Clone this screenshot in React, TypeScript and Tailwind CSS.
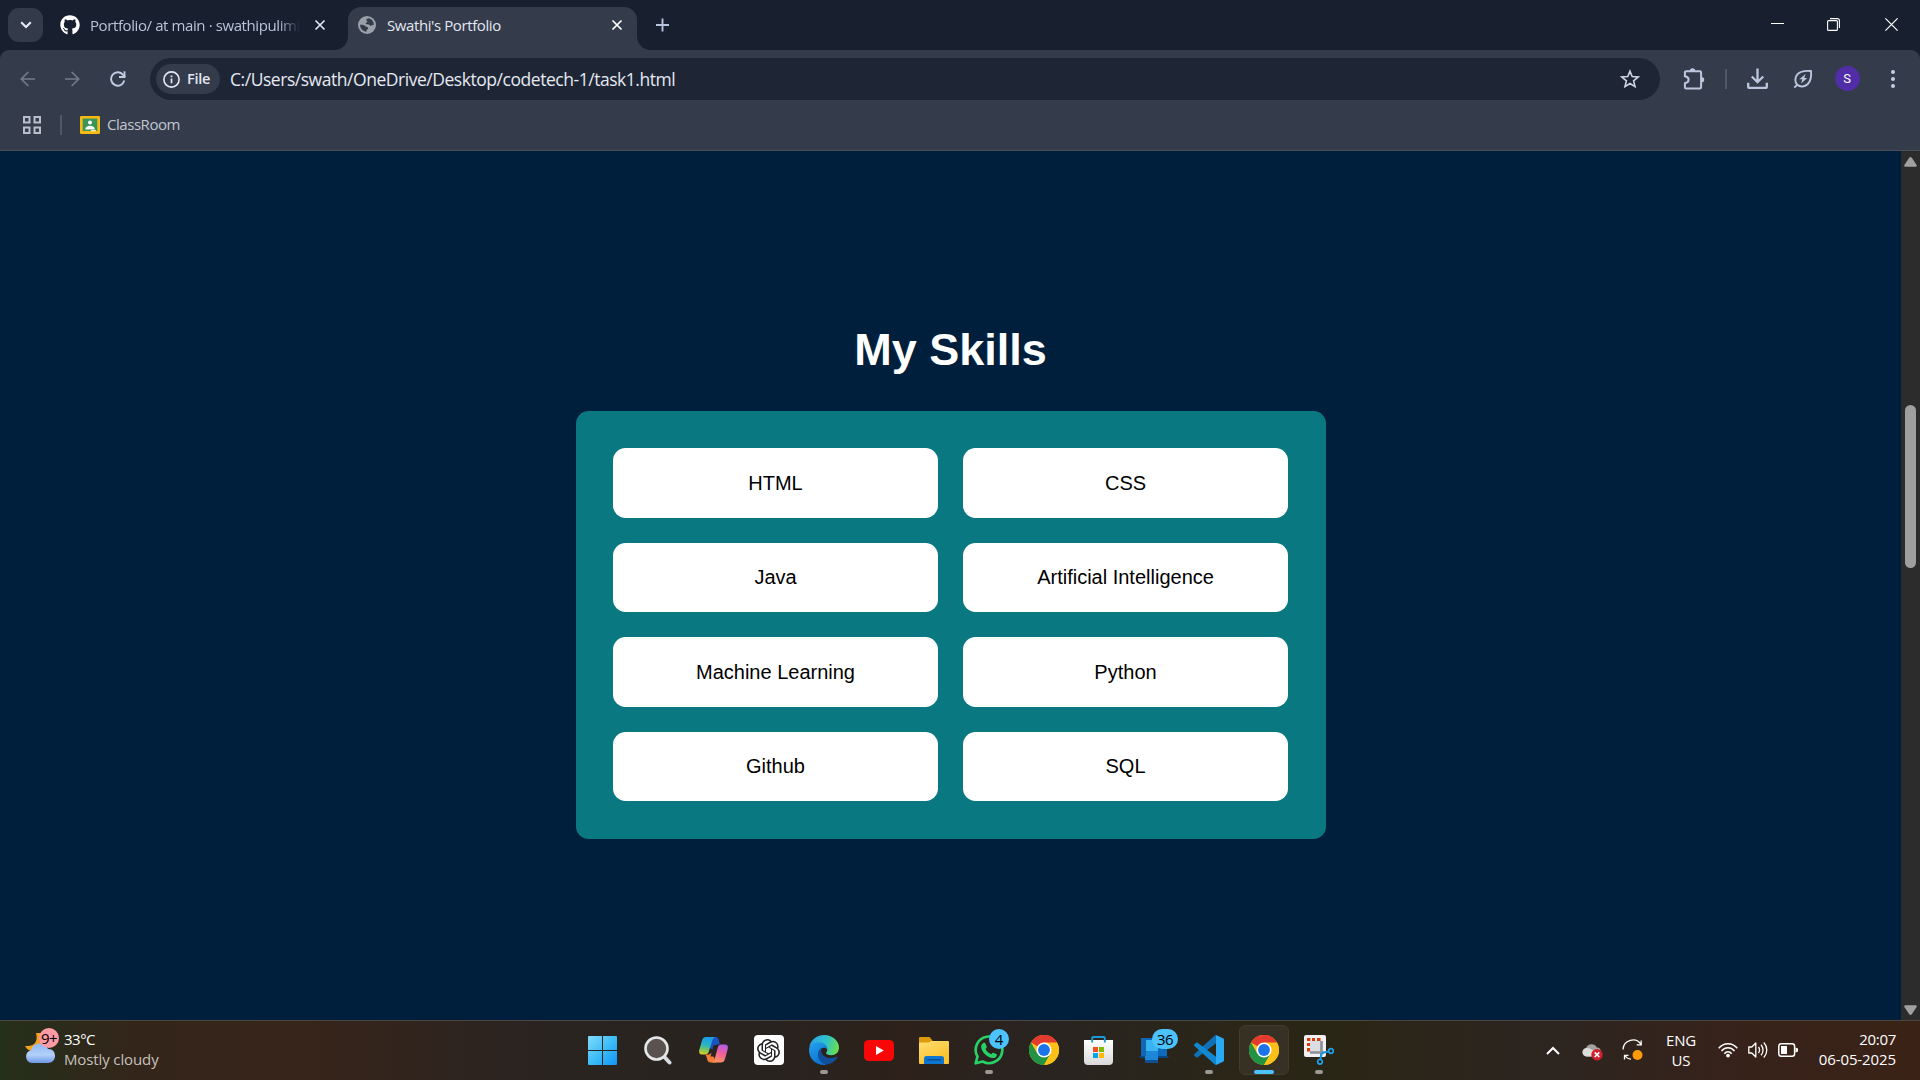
import React from "react";
import { FaGithub } from "react-icons/fa";
import { SiOpenai } from "react-icons/si";

const skills = ["HTML", "CSS", "Java", "Artificial Intelligence", "Machine Learning", "Python", "Github", "SQL"];

function Close({ className = "" }: { className?: string }) {
  return (
    <svg width="12" height="12" viewBox="0 0 12 12" className={className} fill="none" stroke="currentColor" strokeWidth="1.7">
      <path d="M1.5 1.5l9 9M10.5 1.5l-9 9" />
    </svg>
  );
}

function TabStrip() {
  return (
    <div className="flex h-[50px] bg-[#18202f] text-[15px]">
      <div className="mt-2 ml-2 flex h-[34px] w-[35px] items-center justify-center rounded-[11px] bg-[#333b4a]">
        <svg width="12" height="8" viewBox="0 0 12 8" fill="none" stroke="#e6eaf5" strokeWidth="2.1">
          <path d="M1.2 1.2L6 6l4.8-4.8" />
        </svg>
      </div>
      <div className="flex h-[50px] w-[293px] items-center">
        <FaGithub size={20} color="#fff" className="ml-[17px] shrink-0" />
        <div className="ml-[10px] w-[214px] whitespace-nowrap tracking-[-0.4px] text-[#b9c3d9] [mask-image:linear-gradient(to_right,black_88%,transparent_98%)]">
          Portfolio/ at main · swathipulimi
        </div>
        <Close className="ml-[10px] shrink-0 text-[#dfe3ee]" />
      </div>
      <div className="relative mt-[7px] ml-[12px] flex h-[43px] w-[289px] rounded-t-[13px] bg-[#343c4c]">
        <svg className="absolute bottom-0 -left-[14px]" width="14" height="14">
          <path d="M14 0v14H0C8 14 14 8 14 0z" fill="#343c4c" />
        </svg>
        <svg className="absolute -right-[14px] bottom-0" width="14" height="14">
          <path d="M0 0v14h14C6 14 0 8 0 0z" fill="#343c4c" />
        </svg>
        <div className="flex h-9 w-full items-center">
          <svg className="ml-[10px] shrink-0" width="18" height="18" viewBox="0 0 18 18">
            <circle cx="9" cy="9" r="9" fill="#9aa0a8" />
            <path d="M10.500 2.200C8.300 2.600 7.600 4 8.800 4.700c1.200.7 0 1.700-.9 2.300-.8.700.3 1.400 1.800 1.300 1.700-.1 1.800 1.600 3.200 1.500 1.100-.1 1.300-1.200 3-1a7 7 0 00-5.400-6.600zM2 8.700c2.800-.2 4.400.3 5.500 1.500 1 1.100 2.900.4 2.700 2-.1 1.300-2 1-1.700 3.700A7 7 0 012 8.700z" fill="#343c4c" />
          </svg>
          <span className="ml-[11px] flex-1 whitespace-nowrap tracking-[-0.4px] text-[#e3e7f0]">Swathi's Portfolio</span>
          <Close className="mr-[14px] text-white" />
        </div>
      </div>
      <svg className="mt-[18px] ml-[19px]" width="13" height="14" viewBox="0 0 13 14" stroke="#b9c5de" strokeWidth="1.900">
        <path d="M6.500 0.500v13M0 7h13" />
      </svg>
      <div className="ml-auto flex">
        <svg className="mt-[17px] mr-[43px]" width="13" height="13" stroke="#fff" strokeWidth="1">
          <path d="M0 6.500h13" />
        </svg>
        <svg className="mt-[18px] mr-[45px]" width="13" height="13" fill="none" stroke="#fff" strokeWidth="1.100">
          <rect x="0.600" y="2.600" width="9.800" height="9.800" rx="1" />
          <path d="M3 .6h7.400a2 2 0 012 2V10" />
        </svg>
        <svg className="mt-[18px] mr-[22px]" width="13" height="13" stroke="#fff" strokeWidth="1.200">
          <path d="M.4.4l12.200 12.200M12.600.4L.4 12.600" />
        </svg>
      </div>
    </div>
  );
}

function Toolbar() {
  return (
    <div className="h-[100px] bg-[#18202f]">
      <div className="h-[100px] rounded-t-[9px] bg-[#343c4c]">
        <div className="flex h-[58px] items-center">
          <svg className="ml-5 shrink-0" width="15" height="16" viewBox="0 0 15 16" fill="none" stroke="#737b8b" strokeWidth="1.700">
            <path d="M15 8H1.500M8.300 1L1.300 8l7 7" />
          </svg>
          <svg className="ml-[30px] shrink-0" width="15" height="16" viewBox="0 0 15 16" fill="none" stroke="#737b8b" strokeWidth="1.700">
            <path d="M0 8h13.500M6.700 1l7 7-7 7" />
          </svg>
          <svg className="-mt-px ml-[30px] shrink-0" width="16" height="16" viewBox="0 0 16 16" fill="none" stroke="#c0cbe4" strokeWidth="1.900">
            <path d="M14.300 9.600A6.700 6.700 0 1 1 13.200 4L15 6" />
            <path d="M14.500 .3v5.700H9" />
          </svg>
          <div className="ml-6 flex h-[42px] w-[1510px] items-center rounded-full bg-[#1e2636]">
            <div className="ml-[6px] flex h-[30px] w-16 items-center rounded-full bg-[#343c4c]">
              <svg className="ml-[7px]" width="17" height="17" viewBox="0 0 17 17" fill="none" stroke="#e3e7f2" strokeWidth="1.600">
                <circle cx="8.500" cy="8.500" r="7.600" />
                <path d="M8.500 7.600v4.600M8.500 4.500v1.700" strokeWidth="1.700" />
              </svg>
              <span className="-mt-px ml-[7px] text-[14.500px] font-semibold tracking-[-0.300px] text-[#e3e7f2]">File</span>
            </div>
            <span className="ml-[10px] whitespace-nowrap text-[17.500px] tracking-[-0.460px] text-[#e6e9f2]">
              C:/Users/swath/OneDrive/Desktop/codetech-1/task1.html
            </span>
            <svg className="mr-[20px] ml-auto" width="20" height="20" viewBox="0 0 20 20" fill="none" stroke="#d0d5e2" strokeWidth="1.600">
              <path d="M10 2.200l2.200 5.300 5.900.5-4.500 3.900 1.400 5.700-5-3.100-5 3.100 1.400-5.700L1.900 8l5.900-.5z" />
            </svg>
          </div>
          <svg className="-mt-px ml-[22.500px]" width="22" height="22" viewBox="0 0 22 22">
            <path d="M3.200 3.200h13.600a1.300 1.300 0 011.300 1.300v14.700a1.300 1.300 0 01-1.300 1.300H3.200A1.300 1.300 0 011.900 19.200V15.300c5-1 5-6 0-7V4.500a1.300 1.300 0 011.300-1.300z" fill="none" stroke="#bcc7df" strokeWidth="2" />
            <path d="M6.800 3a2.700 2.700 0 015.400 0zM18.500 9a2.700 2.700 0 010 5.400z" fill="#bcc7df" />
          </svg>
          <div className="ml-[20.500px] h-5 w-[2px] bg-[#505868]" />
          <svg className="ml-5" width="21" height="22" viewBox="0 0 21 22" fill="none" stroke="#bcc7df" strokeWidth="2.300">
            <path d="M10.500.5v13.300M4.800 8.500l5.700 5.700 5.700-5.700" />
            <path d="M1.200 14.800v3.600a1.500 1.500 0 001.500 1.500h15.600a1.500 1.500 0 001.500-1.500v-3.600" />
          </svg>
          <svg className="-mt-px ml-[24.500px]" width="20" height="20" viewBox="0 0 20 20" fill="none" stroke="#bcc7df" strokeWidth="1.900">
            <path d="M1.300 18.700l2.800-2.900M4.300 15.800C1.500 13 1.700 8.300 4.600 5.200 7.700 1.800 12.800 1.500 18 2c.5 5.200.2 9.700-3.200 13-3 2.900-7.500 3.400-10.500.8z" />
            <path d="M12.600 5L6.300 10.200h3l-1.200 4.400 6.200-5.500h-3z" fill="#bcc7df" stroke="none" />
          </svg>
          <div className="-mt-px ml-[22px] flex size-[25px] items-center justify-center rounded-full bg-[#512da8] font-[Roboto] text-[13px] text-white">S</div>
          <div className="ml-[31px] flex flex-col gap-[3px]">
            <i className="size-[4px] rounded-full bg-[#c3cde3]" />
            <i className="size-[4px] rounded-full bg-[#c3cde3]" />
            <i className="size-[4px] rounded-full bg-[#c3cde3]" />
          </div>
        </div>
        <div className="flex h-[34px] items-center">
          <svg className="ml-[23px]" width="18" height="18" fill="none" stroke="#b9bec9" strokeWidth="2">
            <path d="M1 1h5.500v5.500H1zM11.500 1H17v5.500h-5.500zM1 11.500h5.500V17H1zM11.500 11.500H17V17h-5.500z" />
          </svg>
          <div className="ml-[19px] h-5 w-[2px] bg-[#505868]" />
          <svg className="ml-[18px]" width="20" height="18" viewBox="0 0 20 18">
            <rect width="20" height="18" rx="1.200" fill="#f6bb12" />
            <rect x="2.700" y="2.500" width="14.600" height="12.500" fill="#3c9558" />
            <circle cx="10" cy="6.500" r="2" fill="#fff" />
            <path d="M5.200 13.500c0-5 9.600-5 9.600 0z" fill="#fff" />
            <path d="M11 14h5v1.400h-5z" fill="#f3e7b0" />
          </svg>
          <span className="-mt-[2px] ml-[7px] text-[15px] tracking-[-0.450px] text-[#c2c6d0]">ClassRoom</span>
        </div>
      </div>
    </div>
  );
}

function Page() {
  return (
    <div className="flex h-[870px] border-t border-[#4a4d55] bg-[#001f3d]">
      <main className="flex w-[1901px] flex-col items-center font-['Liberation_Sans',Arial,sans-serif]">
        <h2 className="mt-[173px] text-[45px] leading-[52px] font-bold text-white">My Skills</h2>
        <div className="mt-[35px] grid h-[428px] w-[750px] auto-rows-[69.4px] grid-cols-2 gap-[25px] rounded-[12.500px] bg-[#0a7881] p-[37.500px] pt-[37.400px]">
          {skills.map((s) => (
            <div key={s} className="flex items-center justify-center rounded-[12.500px] bg-white pb-[0.500px] text-[20px] text-black">
              {s}
            </div>
          ))}
        </div>
      </main>
      <div className="flex w-[19px] flex-col items-center bg-[#2c2c2c]">
        <svg className="mt-[6px]" width="13" height="10">
          <path d="M5.200.8q1.300-1.400 2.600 0L12.600 8q.7 1.700-1 1.700H1.400Q-.3 9.700.4 8z" fill="#a0a0a0" />
        </svg>
        <div className="mt-[238px] h-[163px] w-[11px] rounded-full bg-[#9f9f9f]" />
        <svg className="mt-auto mb-[5px]" width="13" height="10">
          <path d="M5.200 9.200q1.300 1.400 2.600 0L12.600 2q.7-1.700-1-1.700H1.400Q-.3.3.4 2z" fill="#a0a0a0" />
        </svg>
      </div>
    </div>
  );
}

function Chrome() {
  return (
    <svg width="30" height="30" viewBox="0 0 48 48">
      <circle cx="24" cy="24" r="24" fill="#fbc116" />
      <path d="M24 24L3.200 12A24 24 0 0144.800 12z" fill="#e33b2e" />
      <path d="M24 12h20.800A24 24 0 0024 0z" fill="#e33b2e" />
      <path d="M3.200 12A24 24 0 0024 48l10.400-18L24 24l-10.400 6z" fill="#229342" />
      <path d="M24 12h20.800A24 24 0 0124 48l10.400-18z" fill="#fbc116" />
      <circle cx="24" cy="24" r="12" fill="#fff" />
      <circle cx="24" cy="24" r="9.500" fill="#1a73e8" />
    </svg>
  );
}

function Windows() {
  return (
    <svg className="mr-[2px]" width="29" height="29">
      <defs>
        <linearGradient id="win" x1="0" y1="0" x2="29" y2="29" gradientUnits="userSpaceOnUse">
          <stop stopColor="#82dcfb" />
          <stop offset="0.500" stopColor="#3fbdf8" />
          <stop offset="1" stopColor="#1094f5" />
        </linearGradient>
      </defs>
      <path d="M1 0h13v14H0V1a1 1 0 011-1zM15 0h13a1 1 0 011 1v13H15zM0 15h14v14H1a1 1 0 01-1-1zM15 15h14v13a1 1 0 01-1 1H15z" fill="url(#win)" />
    </svg>
  );
}

function Search() {
  return (
    <svg className="mr-[2px]" width="28" height="29" viewBox="0 0 28 29">
      <path d="M19.500 20l6 6.500" stroke="#d8dadd" strokeWidth="4" strokeLinecap="round" />
      <circle cx="12.500" cy="12.500" r="11" fill="#59524f" stroke="#e6e7e8" strokeWidth="2.600" />
    </svg>
  );
}

function Copilot() {
  return (
    <svg className="-mt-px" width="29" height="26" viewBox="0 0 29 26">
      <defs>
        <linearGradient id="cpA" x1="8" y1="0" x2="4" y2="18" gradientUnits="userSpaceOnUse">
          <stop stopColor="#1c9ce8" />
          <stop offset="0.450" stopColor="#2cb5c0" />
          <stop offset="0.750" stopColor="#88c850" />
          <stop offset="1" stopColor="#eecb1e" />
        </linearGradient>
        <linearGradient id="cpB" x1="24" y1="6" x2="17" y2="26" gradientUnits="userSpaceOnUse">
          <stop stopColor="#a75cf0" />
          <stop offset="0.500" stopColor="#f0619a" />
          <stop offset="1" stopColor="#fd9a56" />
        </linearGradient>
      </defs>
      <path d="M9 0h7.500c1.800 0 2.700 1 3.200 2.500L20.800 7.500H19c-2 0-3 1-3.500 2.500L14 13l-3-2z" fill="#1b52c4" />
      <path d="M7 0h10c-2 0-3 1.500-3.500 3L10 14c-.7 2.600-2 3.500-4 3.500H3C.5 17.500-.3 15.500.3 13L3 3.500C3.700 1 5 0 7 0z" fill="url(#cpA)" />
      <path d="M6 17.500h4l3-2 4 10H12c-2.500 0-3.300-1.200-3.800-3-.5-2-.7-4-2.200-5z" fill="#f47b38" />
      <path d="M22 25.500H12c2 0 3-1.500 3.500-3l3.300-12C19.500 8 21 7.500 23 7.500h3c2.500 0 3.300 2 2.700 4.500L26 22c-.7 2.500-2 3.500-4 3.500z" fill="url(#cpB)" />
      <path d="M14.500 8h4.500L15.500 19.500h-4z" fill="#2a2421" />
    </svg>
  );
}

function Edge() {
  return (
    <svg width="30" height="30" viewBox="0 0 30 30">
      <defs>
        <linearGradient id="edTop" x1="2" y1="6" x2="29" y2="14" gradientUnits="userSpaceOnUse">
          <stop stopColor="#2aa5e6" />
          <stop offset="0.550" stopColor="#30c5c6" />
          <stop offset="1" stopColor="#6ae04a" />
        </linearGradient>
        <linearGradient id="edL" x1="2" y1="10" x2="14" y2="30" gradientUnits="userSpaceOnUse">
          <stop stopColor="#229be8" />
          <stop offset="1" stopColor="#0a6ed0" />
        </linearGradient>
      </defs>
      <path d="M.3 12C1.500 5 7.500 0 15 0c8.500 0 15 6 15 12.500 0 5-3.500 7.700-7.700 7.700-3.200 0-5.300-1-5.300-2.200 0-.8 1.300-1.300 1.300-3.200C18.300 11 14.500 8 10 8 6 8 2 9.500.3 12z" fill="url(#edTop)" />
      <path d="M0 15C0 10 4.500 7.300 9.800 7.300c5 0 8.500 3.200 8.500 7-2.500-3.500-8.500-1.300-8.500 4.700 0 5 3 9 7.700 10.700-1 .2-2 .3-2.500.3C6.500 30 0 23.500 0 15z" fill="url(#edL)" />
      <path d="M13.500 12.500C10 14 8.500 17 9 20.500c.6 5 4.500 9 9 9 3.500-.3 8-3 10.300-7 .4-.7-.2-1-.8-.7-6 3-14.500.5-15.300-5.300-.2-1.700.3-3 1.300-4z" fill="#124f9c" />
    </svg>
  );
}

function YouTube() {
  return (
    <svg width="30" height="21">
      <rect width="30" height="21" rx="4.500" fill="#f90606" />
      <path d="M12 6v9l7.800-4.500z" fill="#fff" />
    </svg>
  );
}

function Explorer() {
  return (
    <svg width="30" height="27" viewBox="0 0 30 27">
      <defs>
        <linearGradient id="fld" x1="0" y1="4" x2="10" y2="27" gradientUnits="userSpaceOnUse">
          <stop stopColor="#ffdf73" />
          <stop offset="1" stopColor="#fbc32f" />
        </linearGradient>
      </defs>
      <path d="M0 1a1 1 0 011-1h9.500l3 3.500L10 8H0z" fill="#dd9a0b" />
      <path d="M0 5.500h9c1 0 1.300-.2 2-.7l1.300-.8H29a1 1 0 011 1V26a1 1 0 01-1 1H1a1 1 0 01-1-1z" fill="url(#fld)" />
      <path d="M5 27v-5.500a2.500 2.500 0 012.500-2.500h15a2.500 2.500 0 012.500 2.500V27z" fill="#0f76cf" />
      <path d="M8.500 22.800h13" stroke="#064f96" strokeWidth="1.500" strokeLinecap="round" />
    </svg>
  );
}

function WhatsApp() {
  return (
    <svg width="30" height="30" viewBox="0 0 30 30">
      <path d="M1.700 28.300l1.800-6.800A13.300 13.300 0 1 1 8.600 26.500z" fill="none" stroke="#26d266" strokeWidth="2.700" strokeLinejoin="round" />
      <path d="M10.200 7.800c.7 0 1 .2 1.300.9l1.200 2.700c.4.9-.3 1.500-1.200 2.500 1.200 2.500 3.200 4.200 5.800 5.300.9-1 1.300-1.800 2.100-1.500l2.900 1.400c.6.3.7.6.5 1.400-.4 1.700-2.200 2.700-4 2.600-5.500-.6-10.700-5.500-11.600-10.600-.2-2 1.200-4.700 3-4.700z" fill="#26d266" />
    </svg>
  );
}

function Store() {
  return (
    <svg width="29" height="30" viewBox="0 0 29 30">
      <defs>
        <linearGradient id="st" x1="0" y1="0" x2="0" y2="1">
          <stop stopColor="#fff" />
          <stop offset="1" stopColor="#d9d9d9" />
        </linearGradient>
      </defs>
      <path d="M0 5h29v21a4 4 0 01-4 4H4a4 4 0 01-4-4z" fill="url(#st)" />
      <path d="M8.200 7.500V3a1 1 0 011-1h10.600a1 1 0 011 1v4.500" fill="none" stroke="#1a98d8" strokeWidth="1.900" />
      <path d="M9 12h5v5H9z" fill="#f25022" />
      <path d="M15 12h5v5h-5z" fill="#7fba00" />
      <path d="M9 18h5v5H9z" fill="#00a4ef" />
      <path d="M15 18h5v5h-5z" fill="#ffb900" />
    </svg>
  );
}

function PhoneLink() {
  return (
    <svg className="mt-[1px]" width="30" height="27" viewBox="0 0 30 27">
      <path d="M2 1h26v19H2z" fill="#0d6abb" />
      <path d="M0 19h30l-1.500 2H1.500z" fill="#08467f" />
      <path d="M6 5h13v17a4 4 0 01-4 4H7a1 1 0 01-1-1z" fill="#135ca5" />
      <path d="M6 3h13v11H6z" fill="#38b4f0" />
      <path d="M6 14h13v9H6z" fill="#1e86d8" />
      <path d="M2 1h5v18H2z" fill="#1267b4" />
      <path d="M6 23h13v3H6z" fill="#114f91" />
    </svg>
  );
}

function VSCode() {
  return (
    <svg width="30" height="30" viewBox="0 0 30 30">
      <path d="M22 0v8.300L3.700 22.200a1.200 1.200 0 01-1.600 0L.5 20.700a1.200 1.200 0 010-1.800L20.500.7z" fill="#0f72b8" />
      <path d="M22 30v-8.300L3.700 7.800a1.200 1.200 0 00-1.600 0L.5 9.300a1.200 1.200 0 000 1.800l20 18.200z" fill="#1188d0" />
      <path d="M22 0l7 3.300a1.700 1.700 0 011 1.500v20.400a1.700 1.700 0 01-1 1.500L22 30z" fill="#2aaaf2" />
    </svg>
  );
}

function Snip() {
  return (
    <svg width="30" height="30" viewBox="0 0 30 30">
      <rect width="22" height="22" rx="2" fill="#f1f1f3" />
      <rect x="6" y="6" width="11" height="11" fill="#dcdde0" />
      <path d="M3 4.500h3.400M8 4.500h3M13 4.500h3.500M4.500 8v3M4.500 13v3.500" stroke="#d83b0a" strokeWidth="3" />
      <path d="M17.500 6v13.500M6 17.500h14" stroke="#8b9096" strokeWidth="2.600" />
      <path d="M17.500 18l-1 6M18 18l6-1.500" stroke="#1c93dc" strokeWidth="2.200" />
      <circle cx="16" cy="26.800" r="2.300" fill="none" stroke="#1ea0ea" strokeWidth="1.700" />
      <circle cx="27" cy="16" r="2.300" fill="none" stroke="#1ea0ea" strokeWidth="1.700" />
    </svg>
  );
}

function Gpt() {
  return (
    <div className="flex size-[30px] items-center justify-center rounded-[4px] bg-white text-[#222]">
      <SiOpenai size={23} />
    </div>
  );
}

type App = { icon: () => React.ReactElement; running?: boolean; active?: boolean; badge?: string };
const apps: App[] = [
  { icon: Windows },
  { icon: Search },
  { icon: Copilot },
  { icon: Gpt },
  { icon: Edge, running: true },
  { icon: YouTube },
  { icon: Explorer },
  { icon: WhatsApp, running: true, badge: "4" },
  { icon: Chrome },
  { icon: Store },
  { icon: PhoneLink, badge: "36" },
  { icon: VSCode, running: true },
  { icon: Chrome, active: true },
  { icon: Snip, running: true },
];

function Tray() {
  return (
    <div className="ml-auto flex h-[59px] items-center text-[15px] leading-5 text-white">
      <svg className="mr-[22px] -mt-px" width="14" height="9" fill="none" stroke="#fff" strokeWidth="2">
        <path d="M1 8l6-6 6 6" />
      </svg>
      <svg className="mt-[2px] mr-[19px]" width="21" height="18" viewBox="0 0 21 18">
        <path d="M4.500 13.500A4.200 4.200 0 014 5.200C5.500 0 13 0 14.800 4.500c2.700 0 4.200 2 4.200 4.500s-2 4.500-4.500 4.500z" fill="#a3a3a1" />
        <path d="M4.500 13.500A4.200 4.200 0 015 5c3 0 5 2 8 3.500v5z" fill="#deddda" />
        <circle cx="15" cy="11.700" r="5.700" fill="#d01f2e" />
        <path d="M12.700 9.400l4.600 4.600M17.300 9.400l-4.600 4.600" stroke="#fff" strokeWidth="1.600" />
      </svg>
      <svg className="-mt-px mr-[23px]" width="21" height="22" viewBox="0 0 21 22" fill="none" stroke="#fff" strokeWidth="1.300">
        <path d="M1 10.500C1.500 1 14-2.500 19 5.500M19.200 1.500v4.300h-4.500M2.500 20.500v-4.200h4M2.700 16.500c1.500 2.200 3.800 3.500 6.300 3.700" />
        <circle cx="15.500" cy="16" r="5" fill="#ff9a0a" stroke="none" />
      </svg>
      <div className="-mt-[1px] w-[30px] text-center tracking-[-0.200px]">
        ENG
        <br />
        US
      </div>
      <svg className="-mt-px ml-[22px]" width="20" height="16" viewBox="0 0 20 16" fill="none" stroke="#fff" strokeWidth="1.500">
        <path d="M.7 6.200c5-6 13.600-6 18.600 0M3.500 9c3.700-4.300 9.300-4.300 13 0M6.300 11.700c2.100-2.500 5.300-2.500 7.400 0" />
        <circle cx="10" cy="13.600" r="1.900" fill="#fff" stroke="none" />
      </svg>
      <svg className="-mt-px ml-[10px]" width="20" height="18" viewBox="0 0 20 18" fill="none" stroke="#fff" strokeWidth="1.300" strokeLinejoin="round">
        <path d="M.8 6v6h3l4 4V2L3.800 6zM10.500 6c1.300 1.800 1.300 4.200 0 6M13 3.800c2.700 3 2.700 7.400 0 10.400M15.800 1.500c4 4.300 4 10.700 0 15" />
      </svg>
      <svg className="-mt-px ml-[10px]" width="20" height="14" viewBox="0 0 20 14">
        <rect x=".8" y=".8" width="15.800" height="12.400" rx="2.500" fill="none" stroke="#fff" strokeWidth="1.500" />
        <path d="M3 3h6v8H3z" fill="#fff" />
        <path d="M17.500 4.500l2.500 1v3l-2.500 1z" fill="#fff" />
      </svg>
      <div className="-mt-1 mr-6 ml-[20px] w-[78px] whitespace-nowrap">
        <div className="flex justify-end tracking-[-0.300px]">20:07</div>
        <div className="flex justify-end tracking-[-0.100px]">06-05-2025</div>
      </div>
    </div>
  );
}

function Taskbar() {
  return (
    <div className="flex h-[60px] border-t border-[#4c4740] bg-[linear-gradient(90deg,#25301b_0px,#33251a_130px,#37241a_300px,#2a2421_540px,#29231f_780px,#2d211a_900px,#292421_1040px,#2a2617_1250px,#2a2616_1340px,#2c2520_1530px,#37221a_1750px,#3a2216_1920px)]">
      <div className="flex w-[576px] text-[15px] leading-5">
        <div className="relative mt-[6px] ml-[25px] h-[36px] w-[34px]">
          <svg width="34" height="36" viewBox="0 0 34 36">
            <defs>
              <linearGradient id="cl" x1="0" y1="16" x2="0" y2="36" gradientUnits="userSpaceOnUse">
                <stop stopColor="#8fb8f5" />
                <stop offset="0.600" stopColor="#b2d0fa" />
                <stop offset="1" stopColor="#6d98e6" />
              </linearGradient>
            </defs>
            <path d="M11 6c2 7 0 14-11 13 3 7 14 7 18 0V6z" fill="#f7a11b" />
            <path d="M6.500 36A6.500 6.500 0 016 23.300C7.500 15 20 14 23 22c4.500-.3 7 3 7 7s-3 7-7 7z" fill="url(#cl)" />
          </svg>
          <div className="absolute top-[1px] left-[14px] flex size-5 items-center justify-center rounded-full bg-[#ff99a4] text-[15px] tracking-[-0.600px] text-black">9+</div>
        </div>
        <div className="mt-[8px] ml-[5px] whitespace-nowrap">
          <div className="tracking-[-0.500px] text-white">33°C</div>
          <div className="tracking-[-0.120px] text-[#c6c1bd]">Mostly cloudy</div>
        </div>
      </div>
      <div className="flex">
        {apps.map(({ icon: Icon, running, active, badge }, i) => (
          <div key={i} className="relative flex w-[55px] flex-col items-center pt-1">
            <div className={active ? "flex h-[50px] w-[50px] items-center justify-center rounded-md border border-[#403b2d] bg-[#363124]" : "flex h-[50px] w-[50px] items-center justify-center"}>
              <Icon />
            </div>
            {running && <div className="absolute top-[49px] h-1 w-2 rounded-full bg-[#9c9893]" />}
            {active && <div className="absolute top-[49px] h-1 w-5 rounded-full bg-[#4cc2ff]" />}
            {badge && (
              <div className="absolute top-2 right-[-1px] flex w-[30px] justify-center">
                <div className={badge.length > 1 ? "mr-[4px] flex h-5 w-[26px] shrink-0 items-center justify-center rounded-full bg-[#4cc2ff] text-[15px] tracking-[-0.500px] text-black" : "mr-[6px] flex size-5 items-center justify-center rounded-full bg-[#4cc2ff] text-[15px] text-black"}>
                  {badge}
                </div>
              </div>
            )}
          </div>
        ))}
      </div>
      <Tray />
    </div>
  );
}

export default function App() {
  return (
    <div className="h-[1080px] w-[1920px] overflow-hidden font-['Open_Sans','Noto_Sans',sans-serif]">
      <TabStrip />
      <Toolbar />
      <Page />
      <Taskbar />
    </div>
  );
}
